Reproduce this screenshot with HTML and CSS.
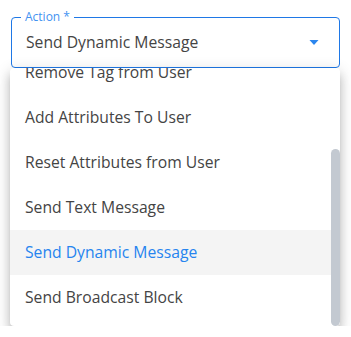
FILE: index.html
```html
<!DOCTYPE html>
<html lang="en">
  <head>
    <meta charset="UTF-8" />
    <meta name="viewport" content="width=device-width, initial-scale=1.0" />
    <title>Action select</title>
    <link rel="stylesheet" href="styles.css">
  </head>
  <body>
    <div class="select-wrap">
      <fieldset class="select-field">
        <legend>Action *</legend>
        <span class="select-value">Send Dynamic Message</span>
        <svg class="select-arrow" viewBox="0 0 24 24" width="24" height="24">
          <path d="M7.5 10l4.5 5 4.5-5z" fill="#2b86ee" />
        </svg>
      </fieldset>

      <div class="menu">
        <ul class="menu-list" id="menu-list">
          <li>Add Tag to User</li>
          <li>Remove Tag from User</li>
          <li>Add Attributes To User</li>
          <li>Reset Attributes from User</li>
          <li>Send Text Message</li>
          <li class="selected">Send Dynamic Message</li>
          <li>Send Broadcast Block</li>
        </ul>
        <div class="scrollbar">
          <div class="scroll-thumb"></div>
        </div>
      </div>
    </div>

    <script>
      // open the menu scrolled to the end, like the widget does
      const list = document.querySelector("#menu-list");
      list.scrollTop = list.scrollHeight;
    </script>
  </body>
</html>
```

FILE: styles.css
```css
* {
  margin: 0;
  padding: 0;
  box-sizing: border-box;
}

body {
  background: #fff;
  font-family: "Open Sans", "Noto Sans", Arial, sans-serif;
  color: #444;
}

.select-wrap {
  padding: 10px 11px 0 10px;
}

.select-field {
  margin-left: 1px;
  border: 1px solid #1f78e6;
  border-radius: 4px;
  padding: 6px 13px 13px 14px;
  display: flex;
  align-items: center;
  justify-content: space-between;
  min-width: 0;
}

.select-field legend {
  font-size: 12px;
  line-height: 14px;
  color: #4392f1;
  padding: 0 4px;
  margin-left: -5px;
}

.select-value {
  font-size: 15.7px;
  line-height: 21px;
  color: #444;
}

.select-arrow {
  display: block;
}

.menu {
  display: flex;
  height: 258px;
  background: #fff;
  border-radius: 4px;
  box-shadow: 0 5px 5px -3px rgba(0, 0, 0, 0.2),
    0 8px 10px 1px rgba(0, 0, 0, 0.14),
    0 3px 14px 2px rgba(0, 0, 0, 0.12);
  overflow: hidden;
}

.menu-list {
  flex: 1;
  list-style: none;
  overflow: hidden;
  padding: 8px 0 6px;
}

.menu-list li {
  font-size: 15.7px;
  line-height: 21px;
  padding: 12px 15px;
  color: #444;
}

.menu-list li.selected {
  background: #f4f4f4;
  color: #2684ef;
}

.scrollbar {
  width: 9px;
  display: flex;
  flex-direction: column;
  justify-content: flex-end;
}

.scroll-thumb {
  height: 177px;
  background: #c3c9d1;
  border-radius: 5px;
}
```
